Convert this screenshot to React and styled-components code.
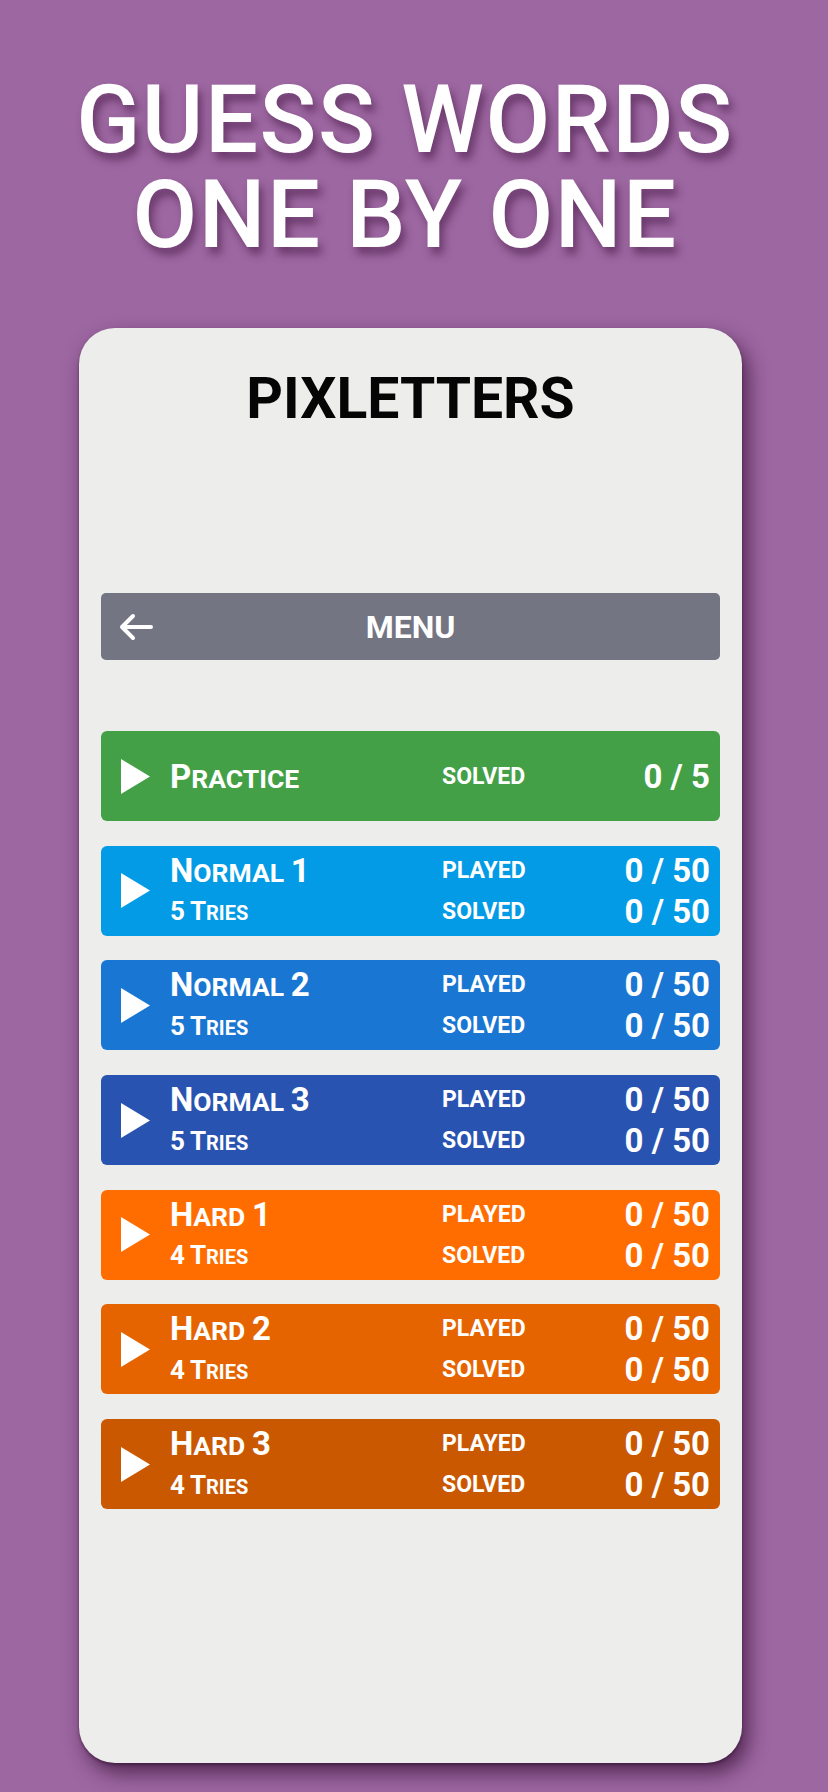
import React from 'react';
import styled, { createGlobalStyle } from 'styled-components';

const GlobalStyle = createGlobalStyle`
    html, body {
        margin: 0;
        padding: 0;
        background: #9d67a1;
    }
    body {
        font-family: Roboto, "Liberation Sans", sans-serif;
    }
`

const Page = styled.div`
    width: 828px;
    height: 1792px;
    display: flex;
    flex-direction: column;
    align-items: center;
    overflow: hidden;
`

const Headline = styled.h1`
    margin: 0;
    padding: 73px 18px 0 0;
    font-size: 94px;
    line-height: 95px;
    font-weight: 500;
    letter-spacing: 1.5px;
    color: #ffffff;
    text-align: center;
    text-shadow: 4px 7px 9px rgba(70, 25, 70, 0.6);
`

const Card = styled.div`
    margin: 65px 7px 0 0;
    width: 663px;
    height: 1435px;
    box-sizing: border-box;
    padding: 0 22px;
    background: #ededeb;
    border-radius: 36px;
    box-shadow: 6px 10px 20px rgba(40, 5, 40, 0.65), 0 2px 3px rgba(30, 0, 30, 0.4);
    display: flex;
    flex-direction: column;
`

const Brand = styled.h2`
    margin: 37px 0 0;
    font-size: 57px;
    line-height: 68px;
    font-weight: 700;
    color: #050505;
    text-align: center;
`

const MenuBar = styled.div`
    margin-top: 160px;
    height: 67px;
    border-radius: 5px;
    background: #737582;
    display: grid;
    grid-template-columns: 1fr auto 1fr;
    align-items: center;
`

const BackButton = styled.div`
    padding-left: 18px;
    display: flex;
    align-items: center;
`

const MenuTitle = styled.span`
    font-size: 32px;
    line-height: 1;
    font-weight: 700;
    color: #ffffff;
`

const LevelList = styled.div`
    margin-top: 71px;
    display: flex;
    flex-direction: column;
    gap: 24.7px;
`

const LevelRow = styled.div`
    height: 90px;
    border-radius: 6px;
    background: ${props => props.color};
    box-sizing: border-box;
    padding: 0 10px 0 20px;
    display: flex;
    align-items: center;
    color: #ffffff;
`

const PlayIcon = styled.div`
    width: 29px;
    margin-right: 20px;
    display: flex;
    align-items: center;
`

const NameColumn = styled.div`
    flex: 0 0 272px;
    display: flex;
    flex-direction: column;
    justify-content: center;
`

const TextLine = styled.div`
    height: 41px;
    display: flex;
    align-items: center;
    justify-content: ${props => props.spread ? 'space-between' : 'flex-start'};
    white-space: nowrap;
`

const CapText = styled.span`
    font-weight: 700;
    line-height: 1;
    font-size: ${props => props.small}px;
`

const Big = styled.span`
    font-size: ${props => props.size}px;
`

const StatsColumn = styled.div`
    flex: 1;
    display: flex;
    flex-direction: column;
    justify-content: center;
`

const StatLabel = styled.span`
    font-size: 23px;
    line-height: 1;
    font-weight: 700;
`

const StatValue = styled.span`
    font-size: 33px;
    line-height: 1;
    font-weight: 700;
`

const levels = [
    { name: 'Practice', color: '#43a047', stats: [['SOLVED', '0 / 5']] },
    { name: 'Normal 1', tries: '5 Tries', color: '#039be5', stats: [['PLAYED', '0 / 50'], ['SOLVED', '0 / 50']] },
    { name: 'Normal 2', tries: '5 Tries', color: '#1976d2', stats: [['PLAYED', '0 / 50'], ['SOLVED', '0 / 50']] },
    { name: 'Normal 3', tries: '5 Tries', color: '#2953b0', stats: [['PLAYED', '0 / 50'], ['SOLVED', '0 / 50']] },
    { name: 'Hard 1', tries: '4 Tries', color: '#ff6d00', stats: [['PLAYED', '0 / 50'], ['SOLVED', '0 / 50']] },
    { name: 'Hard 2', tries: '4 Tries', color: '#e56400', stats: [['PLAYED', '0 / 50'], ['SOLVED', '0 / 50']] },
    { name: 'Hard 3', tries: '4 Tries', color: '#ca5800', stats: [['PLAYED', '0 / 50'], ['SOLVED', '0 / 50']] },
];

// first letter of each word full size, the rest as small capitals
const SmallCaps = ({ text, big, small }) => (
    <CapText small={small}>
        {text.split(' ').map((word, i) => (
            <React.Fragment key={i}>
                {i > 0 && ' '}
                <Big size={big}>{word[0]}</Big>
                {word.slice(1).toUpperCase()}
            </React.Fragment>
        ))}
    </CapText>
);

const Triangle = () => (
    <svg width="29" height="35" viewBox="0 0 29 35">
        <polygon points="0,0 29,17.5 0,35" fill="#ffffff" />
    </svg>
);

const BackArrow = () => (
    <svg width="34" height="28" viewBox="0 0 34 28">
        <path d="M32 14 H3 M14 3 L3 14 L14 25" fill="none" stroke="#ffffff" strokeWidth="4" strokeLinecap="round" strokeLinejoin="round" />
    </svg>
);

const Level = ({ level }) => (
    <LevelRow color={level.color}>
        <PlayIcon>
            <Triangle />
        </PlayIcon>
        <NameColumn>
            <TextLine>
                <SmallCaps text={level.name} big={33} small={26.5} />
            </TextLine>
            {level.tries && (
                <TextLine>
                    <SmallCaps text={level.tries} big={26} small={20} />
                </TextLine>
            )}
        </NameColumn>
        <StatsColumn>
            {level.stats.map(([label, value]) => (
                <TextLine spread key={label}>
                    <StatLabel>{label}</StatLabel>
                    <StatValue>{value}</StatValue>
                </TextLine>
            ))}
        </StatsColumn>
    </LevelRow>
);

export default function App() {
    return (
        <Page>
            <GlobalStyle />
            <Headline>
                GUESS WORDS<br />ONE BY ONE
            </Headline>
            <Card>
                <Brand>PIXLETTERS</Brand>
                <MenuBar>
                    <BackButton>
                        <BackArrow />
                    </BackButton>
                    <MenuTitle>MENU</MenuTitle>
                    <div />
                </MenuBar>
                <LevelList>
                    {levels.map(level => (
                        <Level key={level.name} level={level} />
                    ))}
                </LevelList>
            </Card>
        </Page>
    );
}
